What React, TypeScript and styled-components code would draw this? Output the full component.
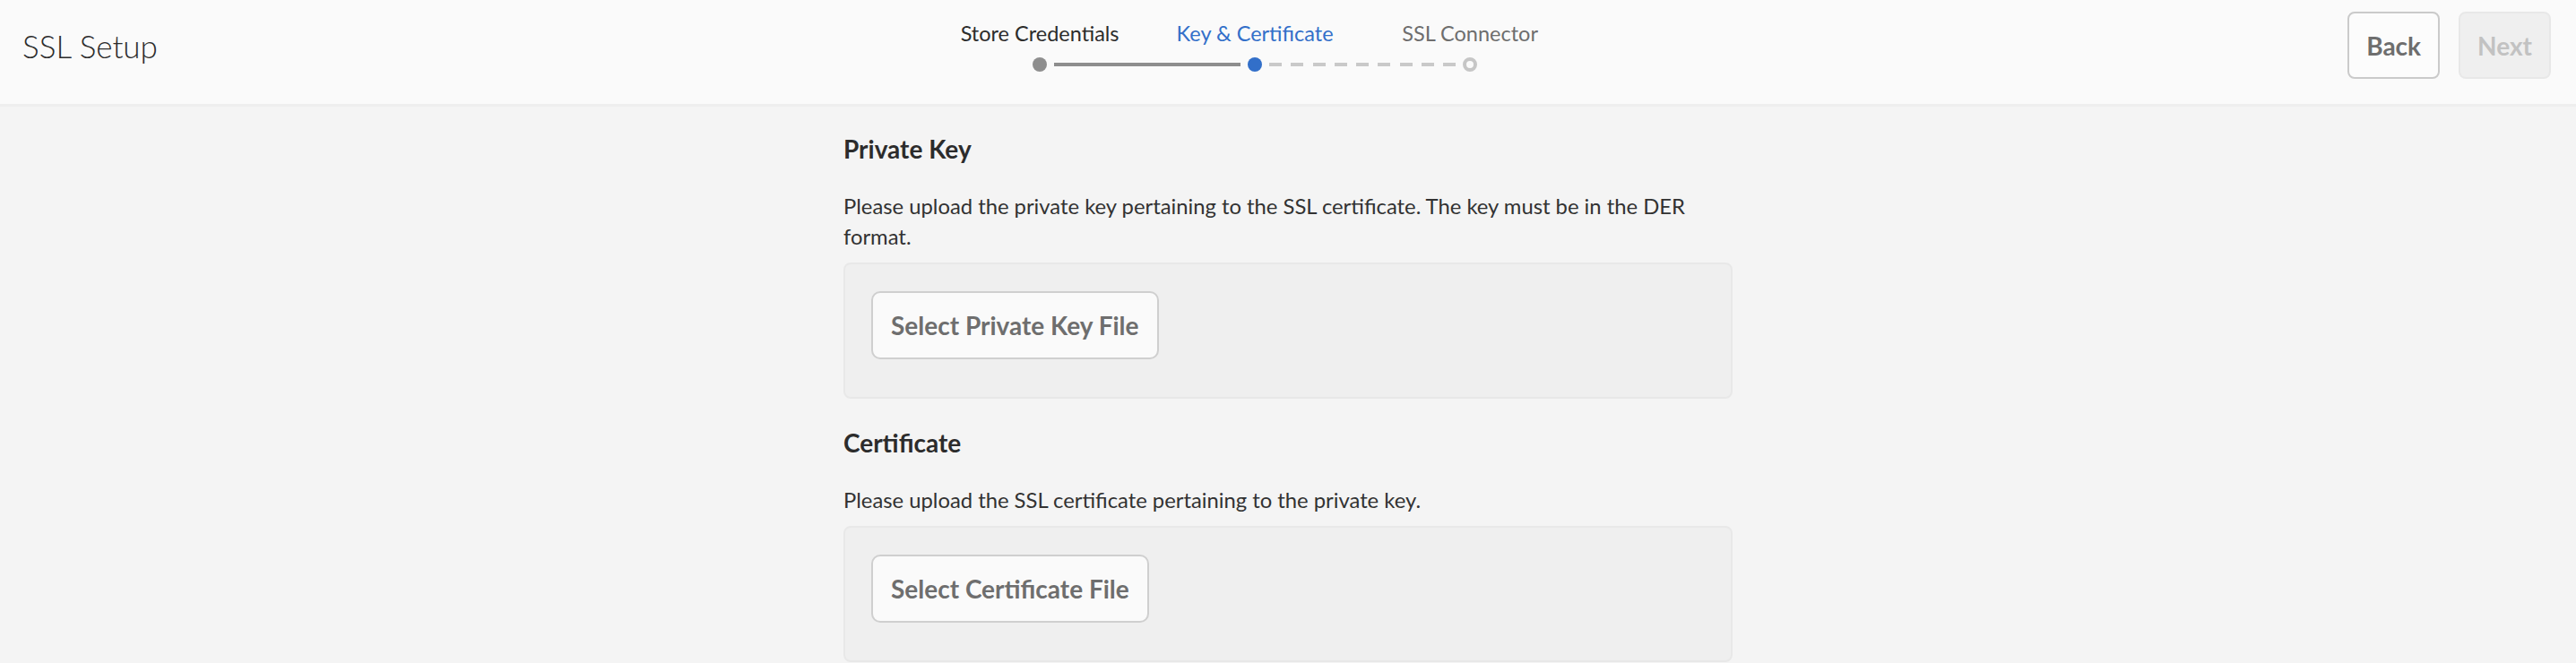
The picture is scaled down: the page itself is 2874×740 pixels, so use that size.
import React from 'react';
import styled, { createGlobalStyle, css } from 'styled-components';

const GlobalStyle = createGlobalStyle`
  html, body {
    margin: 0;
    padding: 0;
    background: #f4f4f4;
    font-family: Lato, "Open Sans", "Noto Sans", sans-serif;
    color: #2c2c2c;
  }
  #root {
    min-height: 740px;
  }
`;

const Header = styled.header`
  display: flex;
  align-items: center;
  height: 101px;
  padding-bottom: 15px;
  background: #fafafa;
  border-bottom: 3px solid #eeeeee;
`;

const Title = styled.h1`
  margin: 0;
  min-width: 156px;
  padding-left: 25px;
  font-size: 35px;
  line-height: 40px;
  font-weight: 300;
  color: #2c2c2c;
  white-space: nowrap;
`;

const StepperArea = styled.div`
  flex: 1;
  display: flex;
  justify-content: center;
`;

const Stepper = styled.nav`
  display: flex;
  flex-direction: column;
  gap: 12px;
  width: 720px;
`;

const Labels = styled.div`
  display: grid;
  grid-template-columns: repeat(3, 1fr);
`;

type StepState = 'done' | 'current' | 'todo';

const Label = styled.span<{ $state: StepState }>`
  text-align: center;
  font-size: 23.5px;
  line-height: 30px;
  white-space: nowrap;
  color: ${({ $state }) => ($state === 'done' ? '#2c2c2c' : $state === 'current' ? '#326fc9' : '#6e6e6e')};
`;

const Track = styled.div`
  display: flex;
  align-items: center;
  padding: 0 112px;
  height: 16px;
`;

const Dot = styled.span<{ $state: StepState }>`
  box-sizing: border-box;
  flex: none;
  width: 16px;
  height: 16px;
  border-radius: 50%;
  ${({ $state }) =>
    $state === 'todo'
      ? css`
          border: 4px solid #c6c6c6;
        `
      : css`
          background: ${$state === 'current' ? '#326fc9' : '#8e8e8e'};
        `}
`;

const Connector = styled.span<{ $dashed?: boolean }>`
  flex: 1;
  height: 4px;
  margin: 0 8px;
  background: ${({ $dashed }) =>
    $dashed ? 'repeating-linear-gradient(to right, #c9c9c9 0 14px, transparent 14px 24.25px)' : '#8e8e8e'};
`;

const Actions = styled.div`
  display: flex;
  gap: 21px;
  padding-right: 28px;
`;

const HeaderButton = styled.button<{ $disabled?: boolean }>`
  box-sizing: border-box;
  height: 75px;
  padding: 0 19px;
  border-radius: 8px;
  font-family: inherit;
  font-size: 28px;
  font-weight: 700;
  border: 2px solid ${({ $disabled }) => ($disabled ? '#e8e8e8' : '#cacaca')};
  background: ${({ $disabled }) => ($disabled ? '#efefef' : '#fcfcfc')};
  color: ${({ $disabled }) => ($disabled ? '#c2c2c2' : '#6e6e6e')};
`;

const Content = styled.main`
  width: 992px;
  margin: 0 auto;
  padding-top: 30px;
  display: flex;
  flex-direction: column;
  gap: 32px;
`;

const Section = styled.section`
  display: flex;
  flex-direction: column;
`;

const Heading = styled.h2`
  margin: 0;
  font-size: 28px;
  line-height: 34px;
  font-weight: 700;
  color: #2c2c2c;
`;

const Description = styled.p`
  margin: 30px 0 0;
  font-size: 23.8px;
  line-height: 34px;
  color: #323232;
`;

const DropPanel = styled.div`
  margin-top: 12px;
  padding: 30px 29px 42px;
  background: #efefef;
  border: 2px solid #e8e8e8;
  border-radius: 8px;
`;

const FileButton = styled.button`
  box-sizing: border-box;
  height: 76px;
  padding: 0 20px;
  border: 2px solid #cfcfcf;
  border-radius: 10px;
  background: #fafafa;
  font-family: inherit;
  font-size: 28px;
  font-weight: 700;
  color: #6e6e6e;
`;

const steps: { label: string; state: StepState }[] = [
  { label: 'Store Credentials', state: 'done' },
  { label: 'Key & Certificate', state: 'current' },
  { label: 'SSL Connector', state: 'todo' },
];

const uploads = [
  {
    title: 'Private Key',
    text: 'Please upload the private key pertaining to the SSL certificate. The key must be in the DER format.',
    action: 'Select Private Key File',
  },
  {
    title: 'Certificate',
    text: 'Please upload the SSL certificate pertaining to the private key.',
    action: 'Select Certificate File',
  },
];

export default function App() {
  return (
    <>
      <GlobalStyle />
      <Header>
        <Title>SSL Setup</Title>
        <StepperArea>
          <Stepper>
            <Labels>
              {steps.map((s) => (
                <Label key={s.label} $state={s.state}>
                  {s.label}
                </Label>
              ))}
            </Labels>
            <Track>
              <Dot $state="done" />
              <Connector />
              <Dot $state="current" />
              <Connector $dashed />
              <Dot $state="todo" />
            </Track>
          </Stepper>
        </StepperArea>
        <Actions>
          <HeaderButton>Back</HeaderButton>
          <HeaderButton $disabled disabled>
            Next
          </HeaderButton>
        </Actions>
      </Header>
      <Content>
        {uploads.map((u) => (
          <Section key={u.title}>
            <Heading>{u.title}</Heading>
            <Description>{u.text}</Description>
            <DropPanel>
              <FileButton>{u.action}</FileButton>
            </DropPanel>
          </Section>
        ))}
      </Content>
    </>
  );
}
